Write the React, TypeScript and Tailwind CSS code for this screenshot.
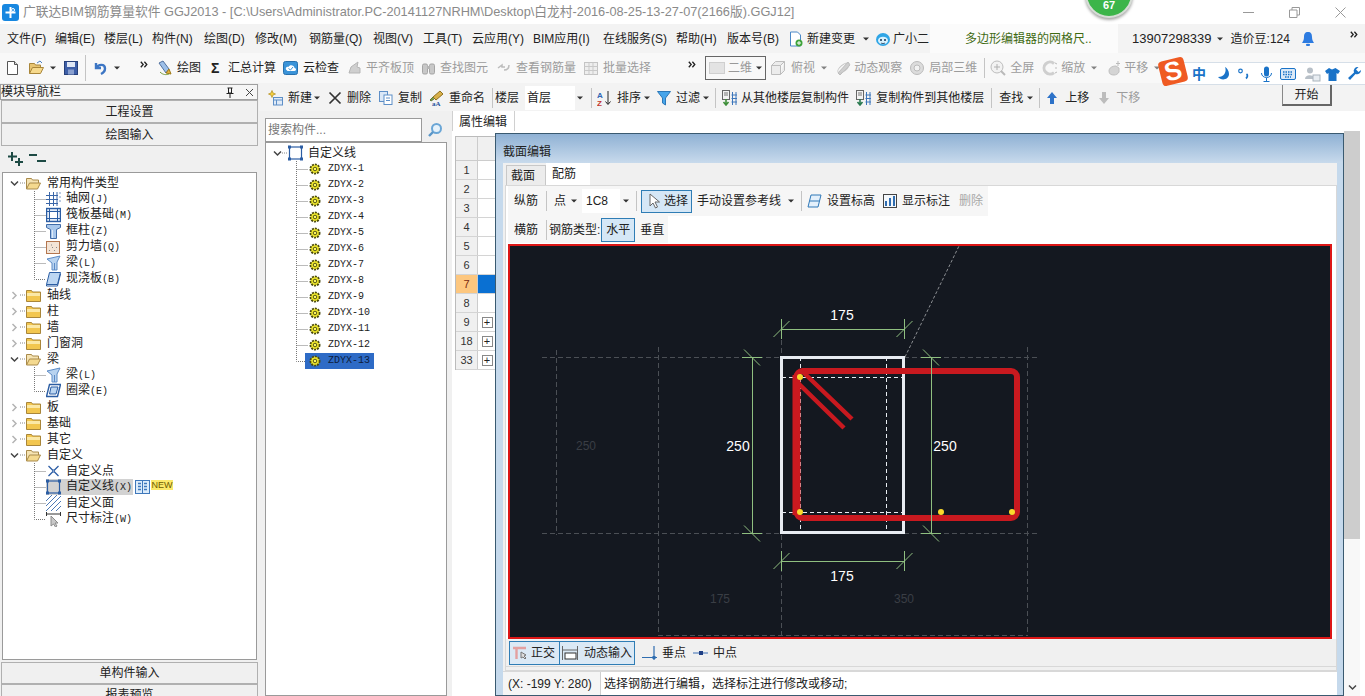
import React from "react";

type SP = { children?: React.ReactNode; w?: number; h?: number; className?: string };
const S = ({ children, w = 16, h = 16, className = "" }: SP) => (
  <svg width={w} height={h} viewBox={`0 0 ${w} ${h}`} className={`shrink-0 ${className}`} fill="none">{children}</svg>
);

const Caret = ({ className = "" }: { className?: string }) => (
  <svg width="6" height="4" viewBox="0 0 6 4" className={`shrink-0 ${className}`}><path d="M0 0.5h6L3 3.5z" fill="#333" /></svg>
);
const More = ({ className = "" }: { className?: string }) => (
  <svg width="8" height="7" viewBox="0 0 8 7" className={`shrink-0 ${className}`} fill="none"><path d="M0.8 0.8L3.2 3.5L0.8 6.2M4.4 0.8L6.8 3.5L4.4 6.2" stroke="#222" strokeWidth="1.3" /></svg>
);
const Sep = ({ className = "" }: { className?: string }) => <div className={`w-px h-[20px] bg-[#c4c4c4] shrink-0 ${className}`} />;
const Tx = ({ children, className = "" }: { children: React.ReactNode; className?: string }) => (
  <span className={`whitespace-nowrap shrink-0 leading-[16px] ${className}`}>{children}</span>
);

/* ---------- icons ---------- */
const NewDoc = () => <S w={15}><path d="M2.5 1.5h7l3 3v10h-10z" fill="#fff" stroke="#555" /><path d="M9.5 1.5v3h3" stroke="#555" fill="#ddd" /></S>;
const OpenF = () => <S w={17}><path d="M1.5 13.5v-10h5l1 1.500h5v2" fill="#e7c472" stroke="#a9863a" /><path d="M1.500 13.500l3-6h11l-3 6z" fill="#f6d98c" stroke="#a9863a" /><path d="M9 3l3-2 2 2" stroke="#4a7fc0" /></S>;
const Save = () => <S w={14}><rect x="0.500" y="1.500" width="13" height="13" fill="#3e5fa8" stroke="#27407a" /><rect x="3" y="2" width="8" height="5" fill="#dfe7f5" /><rect x="4" y="9.500" width="6" height="5" fill="#8aa0cf" /></S>;
const Undo = () => <S w={14}><path d="M3 3v5h5M3.500 8C5 4 12 3.500 12 8.500 12 11 10 13 8 14" stroke="#3d76c4" strokeWidth="2.400" /></S>;
const Pencil = () => <S><path d="M2 3l4-2 6 8-3 4z" fill="#9ec0e8" stroke="#52719e" /><path d="M9 13l5 1-2-5z" fill="#e3b13a" stroke="#a07a16" /><path d="M3 12c3 3 6 3 9 2" stroke="#7a9c3a" /></S>;
const Cloud = () => <S w={15}><rect x="0.500" y="1.500" width="14" height="13" rx="2" fill="#3a93d8" stroke="#2770ad" /><path d="M3.500 10c-2-2 1-4 2-3 1-3 6-2 6 1 2 0 2 3 0 3h-7z" fill="#fff" /><path d="M5.500 8.500l2 1.500 2.500-3" stroke="#3a93d8" /></S>;
const G1 = ({ w = 15 }: { w?: number }) => <S w={w}><path d="M2 13l2-6 7-5-1 5 3 1v5z" fill="#cfcfcf" stroke="#b5b5b5" /></S>;
const Binoc = () => <S w={15}><rect x="1.500" y="4" width="5" height="10" rx="1.500" fill="#c8c8c8" stroke="#a5a5a5" /><rect x="8.500" y="4" width="5" height="10" rx="1.500" fill="#c8c8c8" stroke="#a5a5a5" /><rect x="6" y="6" width="3" height="3" fill="#b5b5b5" /></S>;
const Link = () => <S w={13}><path d="M1 8l4-3v2h3M12 5c0 4-2 5-5 5" stroke="#bcbcbc" strokeWidth="1.500" /></S>;
const Batch = () => <S w={14}><rect x="0.500" y="2.500" width="13" height="12" fill="#eee" stroke="#c4c4c4" /><path d="M0.500 6.500h13M0.500 10.500h13M5 2.500v12M9 2.500v12" stroke="#c9c9c9" /></S>;
const Cube = () => <S><path d="M1.500 5.500h9v9h-9zM1.500 5.500l4-4h9l-4 4M10.500 14.500l4-4v-9" fill="#ececec" stroke="#bdbdbd" /></S>;
const Orbit = () => <S w={17}><path d="M3 13L13 2l2 3L5 15z" fill="#cfcfcf" stroke="#bdbdbd" /><ellipse cx="8.500" cy="8" rx="7" ry="3" stroke="#c5c5c5" transform="rotate(-40 8.500 8)" /></S>;
const Sphere = () => <S><circle cx="8" cy="8" r="6.500" fill="#dcdcdc" stroke="#bbb" /><circle cx="8" cy="8" r="3" fill="#f2f2f2" stroke="#bbb" /></S>;
const Mag = () => <S><circle cx="7" cy="7" r="6" fill="#f2f2f2" stroke="#bdbdbd" /><path d="M7 4v6M4 7h6" stroke="#b0b0b0" /><path d="M11 11l4 4" stroke="#b9b9b9" strokeWidth="2" /></S>;
const Zoomi = () => <S><path d="M12 3.500A6 6 0 1 0 12 12.500" stroke="#cfcfcf" strokeWidth="3" /><path d="M13 3l2 1M13 8h2M13 13l2-1" stroke="#bbb" /></S>;
const Hand = () => <S w={15}><path d="M2 11c0-3 3-5 7-5l3 2v4c-1 2-3 3-5 3-3 0-5-1-5-4z" fill="#d4d4d4" stroke="#c0c0c0" /><path d="M11 1v5M9 3.500h4" stroke="#bbb" /></S>;
const AddIc = () => <S w={15}><rect x="5.500" y="7.500" width="9" height="7.500" fill="#dfeaf7" stroke="#5e8fc7" /><path d="M5.500 10h9M8.500 10v5" stroke="#5e8fc7" /><path d="M4 0.500l1 2.500 2.500 1-2.500 1-1 2.500-1-2.500L0.500 4 3 3z" fill="#f3cf3e" stroke="#b28d18" strokeWidth="0.700" /></S>;
const Xic = () => <S w={14}><path d="M1.500 2.500L12.500 13.500M12.500 2.500L1.500 13.500" stroke="#333" strokeWidth="1.700" /></S>;
const CopyIc = () => <S w={15}><rect x="1.500" y="1.500" width="8" height="10" fill="#dbe8f7" stroke="#5e8fc7" /><rect x="6" y="5" width="8" height="9.500" fill="#fff" stroke="#5e8fc7" /><path d="M8 8h4M8 10.500h4" stroke="#5e8fc7" /></S>;
const RenIc = () => <S w={15}><path d="M4 7l7-6 3 3-7 6z" fill="#d8b04a" stroke="#8f6f1d" /><path d="M4 7l-3 3 1 1 3-2" fill="#7a9a46" stroke="#5f7a34" /><text x="3" y="15.500" fontSize="7" fill="#27509c" fontWeight="700" fontFamily="Liberation Serif">aA</text></S>;
const SortIc = () => <S w={15}><text x="0" y="7.500" fontSize="8" fill="#2f66b4" fontWeight="700" fontFamily="Liberation Sans">A</text><text x="0" y="15.500" fontSize="8" fill="#c2372c" fontWeight="700" fontFamily="Liberation Sans">Z</text><path d="M11 1v13M8.500 11.500L11 14.500l2.500-3" stroke="#222" /></S>;
const Funnel = () => <S w={14}><path d="M0.500 1.500h13L8.500 8v7l-3-2V8z" fill="#47a5ea" stroke="#2c78b8" /></S>;
const CopyFrom = ({ c = "#3f8f3a" }: { c?: string }) => <S w={15}><rect x="0.500" y="0.500" width="7" height="9" fill="#f3f3f3" stroke="#666" /><path d="M2 3h4M2 5h4" stroke="#777" /><path d="M4 9v5M1.500 12l2.500 3 2.500-3" stroke={c} strokeWidth="1.600" /><path d="M10.500 2v13M14 2v13M9.500 5h6M9.500 8.500h6M9.500 12h6" stroke="#3c76bb" /></S>;
const Up = ({ gray }: { gray?: boolean }) => <S w={10}><path d={gray ? "M3 2h4v6h3l-5 6-5-6h3z" : "M5 2l5 6H7v6H3V8H0z"} fill={gray ? "#bcbcbc" : "#2d72c8"} /></S>;
const Bell = () => <S w={14}><path d="M7 1c-3 0-4 2-4 5 0 3-1 4-2 6h12c-1-2-2-3-2-6 0-3-1-5-4-5z" fill="#2d7be0" /><rect x="5" y="12.800" width="4" height="2.200" rx="1" fill="#2d7be0" /></S>;
const NewChange = () => <S><path d="M2.500 1h7l3 3v11h-10z" fill="#fff" stroke="#4a88c7" /><circle cx="11" cy="12" r="3.500" fill="#3ea33a" /><path d="M9 12h4M11 10v4" stroke="#fff" /></S>;
const Bot = () => <S><ellipse cx="8" cy="8.500" rx="7" ry="6.500" fill="#2fa5e6" /><ellipse cx="8" cy="9.500" rx="5" ry="3.800" fill="#d8f1fd" /><circle cx="6" cy="9" r="1" fill="#135" /><circle cx="10" cy="9" r="1" fill="#135" /><path d="M6 12c1 .7 3 .7 4 0" stroke="#135" strokeWidth="0.800" /></S>;

const FolderC = () => <S w={15} h={14}><path d="M0.500 2.500h5l1 1.500h8v9.500h-14z" fill="#f2c64f" stroke="#a9863a" /><path d="M1 5h13v3H1z" fill="#fbe8a6" /></S>;
const FolderO = () => <S w={15} h={14}><path d="M0.500 13V2.500h5l1 1.500h6v3" fill="#f5e3b3" stroke="#a98a4a" /><path d="M0.500 13l3-6h11l-3 6z" fill="#f4d98f" stroke="#a98a4a" /></S>;

const Grid1 = () => <S w={15}><path d="M0 4.500h12M0 8.500h12M0 12.500h12M3.500 1v14M7.500 1v14M11 1v14" stroke="#3a66a8" /><path d="M13 2h2M13 6h2M13 10h2" stroke="#7a99c5" /></S>;
const Raft = () => <S w={15}><rect x="0.500" y="1.500" width="14" height="13" stroke="#2b5da3" strokeWidth="1.400" fill="#e4edf8" /><rect x="3.500" y="4.500" width="8" height="7" fill="#fff" stroke="#2b5da3" /><path d="M0.500 4.500h3M0.500 11.500h3M11.500 4.500h3M11.500 11.500h3M3.500 1.500v3M11.500 1.500v3M3.500 11.500v3M11.500 11.500v3" stroke="#2b5da3" /></S>;
const Column = () => <S w={15}><path d="M0.500 1.500h14v3l-4 2v9h-6v-9l-4-2z" fill="#a9c8ec" stroke="#3f6ba8" /><path d="M6.500 7v8" stroke="#dfeaf7" /></S>;
const Wall = () => <S w={15}><rect x="0.500" y="2.500" width="13" height="12" fill="#f3e4d6" stroke="#b4764f" /><path d="M3 11l1 1M6 8l1 1M8 11l1 1M5 6l1 0M10 8l1 1" stroke="#888" /></S>;
const Beam = () => <S w={15}><path d="M1 4l13-3-3 6v8H6V8z" fill="#b8d3f0" stroke="#5c8bc6" /><path d="M8.500 8v7" stroke="#5c8bc6" /></S>;
const Slab = () => <S w={15}><path d="M3.500 1.500h11l-3 12h-11z" fill="#bcd6f2" stroke="#2b5da3" /><path d="M0.500 13.500v1.500h11l3-12" stroke="#2b5da3" /></S>;
const Ring = () => <S w={15}><path d="M3.500 1.500h11l-3 12h-11z" fill="#fff" stroke="#2b5da3" strokeWidth="1.400" /><path d="M5 4h7l-2 7H3.500z" fill="#bcd6f2" stroke="#2b5da3" /></S>;
const PtX = () => <S w={15}><path d="M2.500 3L12.500 13M12.500 3L2.500 13" stroke="#2e5ea6" strokeWidth="1.300" /><circle cx="7.500" cy="8" r="1" fill="#fff" stroke="#2e5ea6" /></S>;
const LineBox = () => (
  <S w={15}>
    <rect x="1.500" y="2" width="12" height="12" stroke="#2b5da3" strokeWidth="1.200" />
    <rect x="0" y="0.500" width="3" height="3" fill="#2b5da3" /><rect x="12" y="0.500" width="3" height="3" fill="#2b5da3" />
    <rect x="0" y="12.500" width="3" height="3" fill="#2b5da3" /><rect x="12" y="12.500" width="3" height="3" fill="#2b5da3" />
  </S>
);
const Hatch = () => <S w={15}><path d="M0 6l6-6M0 11L11 0M0 16L16 0M5 16L15 6M10 16l5-5" stroke="#4c79b6" /></S>;
const Dim = () => <S w={18}><path d="M0.500 1v4M14.500 1v4M0.500 3h14" stroke="#333" /><path d="M5 5v10l2.500-2 2 3 1.500-1-2-3h3z" fill="#c9c9c9" stroke="#8c8c8c" /></S>;
const Book = () => <S w={15}><rect x="0.500" y="1.500" width="14" height="13" fill="#dcecfb" stroke="#3f78bb" /><path d="M7.500 1.500v13" stroke="#3f78bb" /><path d="M3 4.500h3M3 7.500h3M3 10.500h3M9 4.500h3M9 7.500h3M9 10.500h3" stroke="#3f78bb" strokeWidth="1.300" /></S>;
const Gear = () => (
  <S w={14}>
    <circle cx="7" cy="8" r="4.600" fill="#f2ea2a" stroke="#4a4a10" strokeDasharray="2 1" strokeWidth="1.800" />
    <circle cx="7" cy="8" r="1.800" fill="#fbf75e" stroke="#55551a" />
  </S>
);

const Chev = ({ open }: { open?: boolean }) => (
  <svg width="9" height="9" viewBox="0 0 9 9" className="shrink-0" fill="none">
    {open ? <path d="M1 2.500L4.500 6 8 2.500" stroke="#444" strokeWidth="1.500" /> : <path d="M2.500 1L6 4.500 2.500 8" stroke="#b4b4b4" strokeWidth="1.500" />}
  </svg>
);
const Conn = ({ last }: { last?: boolean }) => (
  <svg width="12" height="16" viewBox="0 0 12 16" className="shrink-0">
    <path d={last ? "M0.500 0V8.500H12" : "M0.500 0V16M0.500 8.500H12"} stroke="#777" strokeDasharray="1 1" fill="none" />
  </svg>
);
const Mono = ({ children }: { children: React.ReactNode }) => (
  <span className="font-['Liberation_Mono',monospace] text-[10px]">{children}</span>
);

const FolderIcon = ({ open }: { open?: boolean }) => (open ? <FolderO /> : <FolderC />);
const Par = ({ open, label }: { open?: boolean; label: string }) => (
  <div className="h-4 flex items-center pl-[7px]">
    <Chev open={open} />
    <svg width="6" height="2" className="shrink-0 ml-[1px]"><path d="M0 1h6" stroke="#888" strokeDasharray="1 1" /></svg>
    <span className="shrink-0"><FolderIcon open={open} /></span>
    <Tx className="ml-[6px]">{label}</Tx>
  </div>
);
const Child = ({ icon, label, code, last }: { icon: React.ReactNode; label: string; code?: string; last?: boolean }) => (
  <div className="h-4 flex items-center pl-[31px]">
    <Conn last={last} />
    {icon}
    <Tx className="ml-[5px]">{label}{code ? <Mono>{code}</Mono> : null}</Tx>
  </div>
);

const SideBtn = ({ children, className = "" }: { children: React.ReactNode; className?: string }) => (
  <div className={`mx-[1px] shrink-0 border border-[#b0b0b0] bg-[#f0f0f0] flex items-center justify-center ${className}`}>{children}</div>
);

const LeftPanel = () => (
  <aside className="w-[259px] shrink-0 flex flex-col pt-[1px] bg-[#f0f0f0] text-[#222]">
    <div className="h-[16px] mr-[1px] border border-[#a0a0a0] bg-[#f6f6f6] flex items-center justify-between shrink-0">
      <Tx>模块导航栏</Tx>
      <div className="flex items-center gap-[11px] pr-[3px]">
        <S w={8} h={11}><path d="M1.500 1h5M2.500 1v5h3V1M0.500 6.500h7M4 7v4" stroke="#222" /></S>
        <S w={9} h={9}><path d="M1 1l7 7M8 1L1 8" stroke="#444" /></S>
      </div>
    </div>
    <SideBtn className="h-[23px]">工程设置</SideBtn>
    <SideBtn className="h-[23px]">绘图输入</SideBtn>
    <div className="h-[26px] flex items-center pl-[7px] gap-[5px] shrink-0">
      <S w={17}><path d="M5 1v9M1 5.500h9M12 7v8M8 11h8" stroke="#1d4a44" strokeWidth="2" /></S>
      <S w={18}><path d="M0 4h8M8 10h9" stroke="#1d4a44" strokeWidth="2" /></S>
    </div>
    <div className="h-[488px] mx-[2px] mr-[2px] border border-[#9a9a9a] bg-white pt-[2px] shrink-0 overflow-hidden">
      <Par open label="常用构件类型" />
      <Child icon={<Grid1 />} label="轴网" code="(J)" />
      <Child icon={<Raft />} label="筏板基础" code="(M)" />
      <Child icon={<Column />} label="框柱" code="(Z)" />
      <Child icon={<Wall />} label="剪力墙" code="(Q)" />
      <Child icon={<Beam />} label="梁" code="(L)" />
      <Child icon={<Slab />} label="现浇板" code="(B)" last />
      <Par label="轴线" />
      <Par label="柱" />
      <Par label="墙" />
      <Par label="门窗洞" />
      <Par open label="梁" />
      <Child icon={<Beam />} label="梁" code="(L)" />
      <Child icon={<Ring />} label="圈梁" code="(E)" last />
      <Par label="板" />
      <Par label="基础" />
      <Par label="其它" />
      <Par open label="自定义" />
      <Child icon={<PtX />} label="自定义点" />
      <div className="h-4 flex items-center pl-[31px]">
        <Conn />
        <div className="flex items-center h-4 bg-[#d2d2d2] pr-[1px]">
          <LineBox />
          <Tx className="ml-[5px]">自定义线<Mono>(X)</Mono></Tx>
        </div>
        <span className="ml-[2px]"><Book /></span>
        <span className="ml-[1px] -mt-[5px] h-[10px] w-[22px] text-center bg-[#fbe96a] text-[#6b5a00] text-[9px] leading-[10px] font-['Liberation_Sans',sans-serif] shrink-0">NEW</span>
      </div>
      <Child icon={<Hatch />} label="自定义面" />
      <div className="h-4 flex items-center pl-[31px]">
        <Conn last />
        <Dim />
        <Tx className="ml-[2px]">尺寸标注<Mono>(W)</Mono></Tx>
      </div>
    </div>
    <SideBtn className="h-[22px] mt-[2px]">单构件输入</SideBtn>
    <SideBtn className="h-[22px]">报表预览</SideBtn>
  </aside>
);

const Middle = () => (
  <section className="w-[193px] shrink-0 pl-[6px] pt-[7px] flex flex-col bg-[#f0f0f0]">
    <div className="flex items-center h-[24px] shrink-0">
      <div className="w-[157px] h-[24px] border border-[#9a9a9a] bg-white flex items-center pl-[2px] text-[#777]"><Tx>搜索构件...</Tx></div>
      <span className="ml-[5px]">
        <S w={16}><circle cx="9.500" cy="6.500" r="4.500" stroke="#6aa6d6" strokeWidth="2" fill="#e6f2fb" /><path d="M6 10l-4 4" stroke="#5a96c8" strokeWidth="2.400" /></S>
      </span>
    </div>
    <div className="flex-1 w-[182px] border border-[#9a9a9a] bg-white pt-[2px] text-[#222]">
      <div className="h-4 flex items-center pl-[7px]">
        <Chev open />
        <svg width="6" height="2" className="shrink-0"><path d="M0 1h6" stroke="#888" strokeDasharray="1 1" /></svg>
        <LineBox />
        <Tx className="ml-[5px]">自定义线</Tx>
      </div>
      {Array.from({ length: 13 }, (_, i) => (
        <div key={i} className="h-4 flex items-center pl-[30px]">
          <Conn last={i === 12} />
          <div className={`h-4 flex items-center w-[69px] -ml-[3px] pl-[3px] shrink-0 ${i === 12 ? "bg-[#2e6bc6]" : ""}`}>
            <Gear />
            <span className={`ml-[6px] whitespace-nowrap shrink-0 font-['Liberation_Mono',monospace] text-[10px] leading-[16px] ${i === 12 ? "text-[#0d1c3a]" : "text-[#222]"}`}>ZDYX-{i + 1}</span>
          </div>
        </div>
      ))}
    </div>
  </section>
);

const rows = ["1", "2", "3", "4", "5", "6", "7", "8", "9", "18", "33"];
const PropGrid = () => (
  <div className="mt-[5px] ml-[3px] w-[42px] h-[234px] border border-[#bbb] shrink-0 flex flex-col">
    <div className="h-[24px] flex shrink-0 border-b border-[#ccc]">
      <div className="w-[22px] bg-[#f0f0f0] border-r border-[#ccc]" />
      <div className="w-[18px] bg-[#f0f0f0]" />
    </div>
    {rows.map((r, i) => (
      <div key={r} className="h-[19px] flex shrink-0 border-b border-[#d4d4d4]">
        <div className={`w-[22px] border-r border-[#ccc] flex items-center justify-center text-[11px] ${i === 6 ? "bg-[#fdc77f] text-[#7a2a10]" : "bg-[#f0f0f0] text-[#333]"}`}>{r}</div>
        <div className={`w-[18px] flex items-center justify-center ${i === 6 ? "bg-[#0a70d2]" : "bg-white"}`}>
          {i >= 8 ? <span className="w-[11px] h-[11px] border border-[#888] flex items-center justify-center text-[11px] leading-[10px] text-[#222]">+</span> : null}
        </div>
      </div>
    ))}
  </div>
);

const C = "#8fbf80";
const Tick = ({ x, y, v }: { x: number; y: number; v?: boolean }) =>
  v ? (
    <g stroke={C} fill="none"><path d={`M${x} ${y - 10}V${y + 10}`} /><path d={`M${x - 8} ${y + 8}L${x + 8} ${y - 8}`} /></g>
  ) : (
    <g stroke={C} fill="none"><path d={`M${x - 10} ${y}H${x + 10}`} /><path d={`M${x - 8} ${y - 8}L${x + 8} ${y + 8}`} /></g>
  );
const CanvasArt = () => (
  <svg viewBox="508 244 824 395" className="block w-[824px] h-[395px]" fontFamily="Liberation Sans" fontSize="14">
    <rect x="508" y="244" width="824" height="395" fill="#141820" />
    <g stroke="#4b4f55" strokeDasharray="5 3" fill="none">
      <path d="M542 357.500H780M904 357.500H1037M542 533.500H780M904 533.500H1037" />
      <path d="M556.500 350V535M658.500 347V636M781.500 340V357M781.500 535V636M1027.500 347V636M658 635.500H1027" />
    </g>
    <path d="M905 357L959 246" stroke="#8b8e92" strokeDasharray="3 2" fill="none" />
    <g fill="#3a3e45"><text x="586" y="450" textAnchor="middle" fontSize="12">250</text><text x="720" y="603" textAnchor="middle" fontSize="12">175</text><text x="904" y="603" textAnchor="middle" fontSize="12">350</text></g>
    <rect x="781.500" y="357.500" width="122" height="175" fill="none" stroke="#e8ecf2" strokeWidth="3" />
    <path d="M782 377.500H904M782 512.500H904M800.500 357V533M886.500 357V533" stroke="#e8ecf2" strokeDasharray="4 3" fill="none" />
    <g fill="none" stroke="#c9191f">
      <rect x="796.500" y="371" width="220.500" height="147" rx="6" strokeWidth="6" />
      <path d="M796.500 375V515" strokeWidth="8" />
      <path d="M803 372L852 419M798 383L844 428" strokeWidth="4.500" />
    </g>
    <g fill="#fbd92c"><circle cx="800" cy="377" r="3" /><circle cx="800" cy="512" r="3" /><circle cx="941" cy="512" r="3" /><circle cx="1012" cy="512" r="3" /></g>
    <path d="M781 329.500H904M781 561.500H904M752.500 357V533M931.500 357V533" stroke={C} fill="none" />
    <Tick x={781.500} y={329} v /><Tick x={904.500} y={329} v /><Tick x={781.500} y={561} v /><Tick x={904.500} y={561} v />
    <Tick x={752} y={357.500} /><Tick x={752} y={533.500} /><Tick x={931} y={357.500} /><Tick x={931} y={533.500} />
    <g fill="#fff"><text x="842" y="320" textAnchor="middle">175</text><text x="842" y="581" textAnchor="middle">175</text><text x="738" y="451" textAnchor="middle">250</text><text x="945" y="451" textAnchor="middle">250</text></g>
  </svg>
);

const Dialog = () => (
  <div className="absolute left-[495px] top-[133px] w-[849px] h-[563px] border border-[#3a5a70] flex flex-col bg-[#c5d9ec] text-[#222]">
    <div className="h-[29px] shrink-0 bg-gradient-to-b from-[#8fb1d4] to-[#c8daec] flex items-center pl-[7px] pt-[6px]"><Tx>截面编辑</Tx></div>
    <div className="flex-1 ml-[7px] mr-[6px] bg-[#f0f0f0] flex flex-col min-h-0">
      <div className="h-[22px] flex items-end pl-[3px] shrink-0">
        <div className="w-[40px] h-[20px] bg-[#ececec] border border-b-0 border-[#c8c8c8] flex items-center justify-center pr-[6px]"><Tx>截面</Tx></div>
        <div className="w-[44px] h-[22px] bg-white flex items-center justify-center pr-[8px]"><Tx>配筋</Tx></div>
      </div>
      <div className="flex-1 ml-[2px] bg-white border border-[#d8d8d8] flex flex-col min-h-0">
        <div className="h-[30px] pl-[2px] shrink-0 flex">
          <div className="h-[30px] w-[480px] bg-[#f6f6f6] flex items-center">
            <Tx className="ml-[6px]">纵筋</Tx>
            <Sep className="ml-[8px]" />
            <Tx className="ml-[7px]">点</Tx>
            <Caret className="ml-[5px]" />
            <div className="ml-[5px] w-[38px] h-[24px] bg-white flex items-center pl-[4px] shrink-0 font-['Liberation_Sans',sans-serif]">1C8</div>
            <Caret className="ml-[3px]" />
            <Sep className="ml-[7px]" />
            <div className="ml-[4px] w-[51px] h-[23px] border border-[#2f7db5] bg-[#d5e7f6] flex items-center pl-[6px] shrink-0">
              <S w={13}><path d="M2 1v12l3-3 2.500 5 2-1-2.500-5h4.500z" fill="#fff" stroke="#666" /></S>
              <Tx className="ml-[3px]">选择</Tx>
            </div>
            <Tx className="ml-[5px]">手动设置参考线</Tx>
            <Caret className="ml-[7px]" />
            <Sep className="ml-[7px]" />
            <span className="ml-[5px]"><S w={15}><path d="M4 2h10l-3 12H1z" fill="#e4f0fb" stroke="#2f78b8" /><path d="M3 8h9" stroke="#2f78b8" /></S></span>
            <Tx className="ml-[5px]">设置标高</Tx>
            <span className="ml-[8px]"><S w={14}><rect x="0.500" y="1.500" width="13" height="13" fill="#f4f8fc" stroke="#444" /><path d="M3 13V8M7 13V5M11 13V3" stroke="#2f6db0" strokeWidth="2" /></S></span>
            <Tx className="ml-[5px]">显示标注</Tx>
            <Tx className="ml-[9px] text-[#a8a8a8]">删除</Tx>
          </div>
        </div>
        <div className="h-[28px] pl-[2px] shrink-0 flex">
          <div className="h-[27px] w-[160px] bg-[#f6f6f6] flex items-center">
            <Tx className="ml-[6px]">横筋</Tx>
            <Sep className="ml-[8px]" />
            <Tx className="ml-[2px]">钢筋类型:</Tx>
            <div className="ml-[1px] w-[34px] h-[24px] border border-[#2f7db5] bg-[#d5e7f6] flex items-center justify-center shrink-0"><Tx>水平</Tx></div>
            <Tx className="ml-[5px]">垂直</Tx>
          </div>
        </div>
        <div className="ml-[2px] w-[824px] h-[395px] shrink-0 border-2 border-[#dd1616] bg-[#141820] overflow-hidden">
          <div className="-m-[2px] w-[824px] h-[395px]"><CanvasArt /></div>
        </div>
        <div className="h-[28px] bg-[#f0f0f0] flex items-center pl-[3px] pt-[1px] shrink-0 border-b border-[#d8d8d8]">
          <div className="w-[51px] h-[24px] border border-[#2f7db5] bg-[#dbe9f5] flex items-center pl-[3px] shrink-0">
            <S w={15}><path d="M0 3h13M3.500 3v11" stroke="#e3a0a0" strokeWidth="2.400" /><path d="M8 7v6l2-1 2 2 1-1-2-2 2-1z" fill="#ddd" stroke="#777" /></S>
            <Tx className="ml-[3px]">正交</Tx>
          </div>
          <div className="w-[75px] h-[24px] border border-l-0 border-[#2f7db5] bg-[#dbe9f5] flex items-center pl-[2px] shrink-0">
            <S w={16}><path d="M0.500 1v14M15.500 1v14M0.500 5h15" stroke="#666" /><rect x="3" y="8" width="11" height="6" fill="#fff" stroke="#333" /></S>
            <Tx className="ml-[6px]">动态输入</Tx>
          </div>
          <span className="ml-[7px]"><S w={15}><path d="M0 12.500h15M12 1v14" stroke="#2f6db0" strokeWidth="1.200" /><rect x="10.500" y="11" width="3" height="3" fill="#2f6db0" /></S></span>
          <Tx className="ml-[5px]">垂点</Tx>
          <span className="ml-[7px]"><S w={15}><path d="M0 8h15" stroke="#6f93c4" strokeWidth="1.400" /><rect x="6" y="6" width="4" height="4" fill="#1f3f84" /></S></span>
          <Tx className="ml-[5px]">中点</Tx>
        </div>
        <div className="flex-1 bg-[#f0f0f0] min-h-0" />
      </div>
      <div className="h-[24px] shrink-0 flex border-t border-[#d8d8d8] bg-[#f5f5f5]">
        <div className="w-[97px] pl-[5px] flex items-center font-['Liberation_Sans',sans-serif] text-[12px]">(X: -199 Y: 280)</div>
        <div className="flex-1 bg-white border-l border-[#d0d0d0] pl-[3px] flex items-center"><Tx>选择钢筋进行编辑，选择标注进行修改或移动;</Tx></div>
      </div>
    </div>
  </div>
);

const menus: [string, string][] = [
  ["文件(F)", "w-[48px]"], ["编辑(E)", "w-[49px]"], ["楼层(L)", "w-[48px]"], ["构件(N)", "w-[52px]"],
  ["绘图(D)", "w-[51px]"], ["修改(M)", "w-[54px]"], ["钢筋量(Q)", "w-[64px]"], ["视图(V)", "w-[50px]"],
  ["工具(T)", "w-[49px]"], ["云应用(Y)", "w-[61px]"], ["BIM应用(I)", "w-[70px]"], ["在线服务(S)", "w-[73px]"],
  ["帮助(H)", "w-[51px]"], ["版本号(B)", "w-[61px]"],
];

export default function App() {
  return (
    <div className="relative w-[1365px] h-[696px] overflow-hidden bg-white text-[12px] text-[#222] font-['Liberation_Sans','Noto_Sans_CJK_SC',sans-serif] flex flex-col">
      {/* title */}
      <header className="h-[24px] shrink-0 flex items-center pl-[2px] bg-white">
        <svg width="17" height="17" viewBox="0 0 17 17" className="shrink-0"><rect width="17" height="17" rx="3" fill="#1787e0" /><path d="M8.500 3v11M3.500 8.500h10" stroke="#fff" strokeWidth="2" /><circle cx="11" cy="6" r="1.500" fill="#1787e0" stroke="#fff" /></svg>
        <Tx className="ml-[4px] text-[#8a8a8a] text-[12.750px]">广联达BIM钢筋算量软件 GGJ2013 - [C:\Users\Administrator.PC-20141127NRHM\Desktop\白龙村-2016-08-25-13-27-07(2166版).GGJ12]</Tx>
        <div className="ml-auto flex items-center gap-[35px] pr-[19px]">
          <S w={11} h={11}><path d="M0 5.500h11" stroke="#999" /></S>
          <S w={11} h={11}><path d="M0.500 3h7.500v7.500H0.500zM3 3V0.500h7.500V8H8" stroke="#999" /></S>
          <S w={11} h={11}><path d="M0.500 0.500l10 10M10.500 0.500l-10 10" stroke="#999" /></S>
        </div>
      </header>

      {/* menu */}
      <nav className="h-[29px] shrink-0 bg-[#f3f3f3] flex items-center pl-[7px]">
        {menus.map(([t, w]) => (
          <div key={t} className={`${w} shrink-0`}><Tx>{t}</Tx></div>
        ))}
        <NewChange />
        <Tx className="ml-[3px]">新建变更</Tx>
        <Caret className="ml-[8px]" />
        <span className="ml-[6px]"><Bot /></span>
        <Tx className="ml-[2px]">广小二</Tx>
        <div className="ml-[1px] w-[188px] h-[29px] bg-[#fbfbfb] flex items-center pl-[35px] shrink-0 text-[#3f6a12]"><Tx>多边形编辑器的网格尺..</Tx></div>
        <Tx className="ml-[14px] text-[13px]">13907298339</Tx>
        <Caret className="ml-[5px]" />
        <Tx className="ml-[8px]">造价豆:124</Tx>
        <span className="ml-[11px]"><Bell /></span>
        <More className="ml-[35px] -mt-[8px]" />
      </nav>

      {/* toolbar 1 */}
      <div className="h-[30px] shrink-0 bg-[#f8f8f8] flex items-center pl-[5px]">
        <NewDoc />
        <span className="ml-[8px]"><OpenF /></span>
        <Caret className="ml-[5px]" />
        <span className="ml-[8px]"><Save /></span>
        <Sep className="ml-[7px] !h-[26px]" />
        <span className="ml-[7px]"><Undo /></span>
        <Caret className="ml-[7px]" />
        <More className="ml-[20px] -mt-[8px]" />
        <span className="ml-[9px]"><Pencil /></span>
        <Tx className="ml-[4px]">绘图</Tx>
        <span className="ml-[10px] w-[9px] font-bold text-[14px] leading-[16px] font-['Liberation_Sans',sans-serif] shrink-0">Σ</span>
        <Tx className="ml-[8px]">汇总计算</Tx>
        <span className="ml-[7px]"><Cloud /></span>
        <Tx className="ml-[5px]">云检查</Tx>
        <span className="ml-[8px]"><G1 /></span>
        <Tx className="ml-[4px] text-[#9c9c9c]">平齐板顶</Tx>
        <span className="ml-[7px]"><Binoc /></span>
        <Tx className="ml-[4px] text-[#9c9c9c]">查找图元</Tx>
        <span className="ml-[9px]"><Link /></span>
        <Tx className="ml-[6px] text-[#9c9c9c]">查看钢筋量</Tx>
        <span className="ml-[8px]"><Batch /></span>
        <Tx className="ml-[5px] text-[#9c9c9c]">批量选择</Tx>
        <More className="ml-[37px] -mt-[8px]" />
        <div className="ml-[9px] w-[61px] h-[24px] border border-[#666] flex items-center pl-[3px] shrink-0">
          <span className="w-[16px] h-[12px] bg-[#e3e3e3] border border-[#cfcfcf] shrink-0" />
          <Tx className="ml-[3px] text-[#999]">二维</Tx>
          <Caret className="ml-[4px]" />
        </div>
        <span className="ml-[4px]"><Cube /></span>
        <Tx className="ml-[5px] text-[#9c9c9c]">俯视</Tx>
        <Caret className="ml-[6px] opacity-60" />
        <span className="ml-[8px]"><Orbit /></span>
        <Tx className="ml-[2px] text-[#9c9c9c]">动态观察</Tx>
        <span className="ml-[7px]"><Sphere /></span>
        <Tx className="ml-[4px] text-[#9c9c9c]">局部三维</Tx>
        <Sep className="ml-[7px]" />
        <span className="ml-[5px]"><Mag /></span>
        <Tx className="ml-[4px] text-[#9c9c9c]">全屏</Tx>
        <span className="ml-[8px]"><Zoomi /></span>
        <Tx className="ml-[3px] text-[#9c9c9c]">缩放</Tx>
        <Caret className="ml-[6px] opacity-60" />
        <span className="ml-[10px]"><Hand /></span>
        <Tx className="ml-[2px] text-[#9c9c9c]">平移</Tx>
        <Caret className="ml-[6px] opacity-60" />
      </div>

      {/* body */}
      <main className="flex-1 min-h-0 flex">
        <LeftPanel />
        <div className="flex-1 min-w-0 flex flex-col">
          <div className="h-[28px] shrink-0 bg-[#f3f3f3] flex items-center pl-[9px] pt-[2px]">
            <AddIc />
            <Tx className="ml-[5px]">新建</Tx>
            <Caret className="ml-[2px]" />
            <span className="ml-[8px]"><Xic /></span>
            <Tx className="ml-[5px]">删除</Tx>
            <span className="ml-[7px]"><CopyIc /></span>
            <Tx className="ml-[5px]">复制</Tx>
            <span className="ml-[7px]"><RenIc /></span>
            <Tx className="ml-[5px]">重命名</Tx>
            <Sep className="ml-[7px]" />
            <Tx className="ml-[2px]">楼层</Tx>
            <div className="ml-[6px] w-[50px] h-[24px] bg-white flex items-center pl-[2px] shrink-0">首层</div>
            <Caret className="ml-[2px]" />
            <Sep className="ml-[8px]" />
            <span className="ml-[5px]"><SortIc /></span>
            <Tx className="ml-[5px]">排序</Tx>
            <Caret className="ml-[3px]" />
            <span className="ml-[7px]"><Funnel /></span>
            <Tx className="ml-[5px]">过滤</Tx>
            <Caret className="ml-[3px]" />
            <Sep className="ml-[6px]" />
            <span className="ml-[6px]"><CopyFrom /></span>
            <Tx className="ml-[4px]">从其他楼层复制构件</Tx>
            <span className="ml-[7px]"><CopyFrom c="#2a7a50" /></span>
            <Tx className="ml-[5px]">复制构件到其他楼层</Tx>
            <Sep className="ml-[7px]" />
            <Tx className="ml-[7px]">查找</Tx>
            <Caret className="ml-[4px]" />
            <Sep className="ml-[6px]" />
            <span className="ml-[7px]"><Up /></span>
            <Tx className="ml-[8px]">上移</Tx>
            <span className="ml-[10px]"><Up gray /></span>
            <Tx className="ml-[7px] text-[#9c9c9c]">下移</Tx>
          </div>
          <div className="flex-1 min-h-0 flex">
            <Middle />
            <div className="flex-1 min-w-0 flex flex-col bg-white">
              <div className="h-[20px] shrink-0 flex items-end">
                <div className="w-[63px] h-[20px] border-x border-[#d0d0d0] flex items-center justify-center pt-[2px] pr-[1px]"><Tx>属性编辑</Tx></div>
              </div>
              <div className="flex-1 min-h-0 flex">
                <PropGrid />
                <div className="flex-1" />
                <div className="w-[16px] mr-[5px] shrink-0 flex flex-col bg-[#f8f8f8]">
                  <div className="h-[408px] bg-[#cdcdcd] shrink-0" />
                  <div className="mt-auto h-[16px] flex items-center justify-center pb-[2px]"><Chev open /></div>
                </div>
              </div>
            </div>
          </div>
        </div>
      </main>

      {/* floating: 开始 button behind the IME bar */}
      <div className="absolute left-[1282px] top-[80px] w-[50px] h-[26px] bg-[#f2f2f2] border-r-2 border-b-2 border-[#666] border-l border-l-[#888] flex items-end justify-center pb-[1px]"><Tx>开始</Tx></div>

      {/* floating: IME bar */}
      <div className="absolute left-[1170px] top-[62px] w-[195px] h-[23px] bg-white border-y border-[#d6dfe8] flex items-center pl-[22px]">
        <span className="text-[14px] leading-[16px] font-bold text-[#1a73c8] shrink-0">中</span>
        <span className="ml-[10px]"><S w={14}><path d="M9 1c2 5-1 10-7 10 3 4 11 3 11-3 0-3-2-6-4-7z" fill="#1a73c8" /></S></span>
        <span className="ml-[7px]"><S w={13}><circle cx="3.500" cy="5" r="1.800" stroke="#1a73c8" strokeWidth="1.200" /><path d="M9.500 8c1.500 1 1 3-.5 4.500" stroke="#1a73c8" strokeWidth="1.800" /></S></span>
        <span className="ml-[10px]"><S w={13}><rect x="4" y="0.500" width="5" height="10" rx="2.500" fill="#1a73c8" /><path d="M1.500 7c0 6 10 6 10 0M6.500 12v3M3.500 15.500h6" stroke="#1a73c8" /></S></span>
        <span className="ml-[7px]"><S w={16}><rect x="0.500" y="2.500" width="15" height="11" rx="1.500" fill="#dbe9f7" stroke="#1a73c8" /><path d="M3 6h10M3 8.500h10M5 11h6" stroke="#1a73c8" strokeDasharray="1.500 1" strokeWidth="1.300" /></S></span>
        <span className="ml-[8px]"><S w={17}><circle cx="6" cy="4.500" r="3" fill="#b8c0c8" /><path d="M1 13c0-5 9-5 10 0z" fill="#b8c0c8" /><rect x="9" y="9" width="7" height="6" fill="#e8edf2" stroke="#aab4bd" /></S></span>
        <span className="ml-[4px]"><S w={15}><path d="M4 2l3 1.500L10.500 2 15 5l-2 3-1.500-1v8h-8V7L2 8 0 5z" fill="#1a73c8" /></S></span>
        <span className="ml-[7px]"><S w={15}><path d="M14 4a4 4 0 0 1-5.500 4L3 14 1 12l6-5.500A4 4 0 0 1 11.500 1L9 3.500 11.500 6z" fill="#1a73c8" /></S></span>
      </div>
      <div className="absolute left-[1160px] top-[59px] w-[26px] h-[25px] rounded-[4px] bg-[#ef5a22] -rotate-[14deg] flex items-center justify-center text-white font-bold text-[26px] leading-[25px]">S</div>

      {/* floating: speed ball */}
      <div className="absolute left-[1085px] -top-[30px] w-[48px] h-[48px] rounded-full bg-[#3cb54a] border-2 border-[#d6ddd6] shadow-[0_2px_3px_rgba(0,0,0,0.35)] flex items-end justify-center text-white font-bold text-[11px] leading-[16px] pb-[3px]">67</div>

      <Dialog />
    </div>
  );
}
